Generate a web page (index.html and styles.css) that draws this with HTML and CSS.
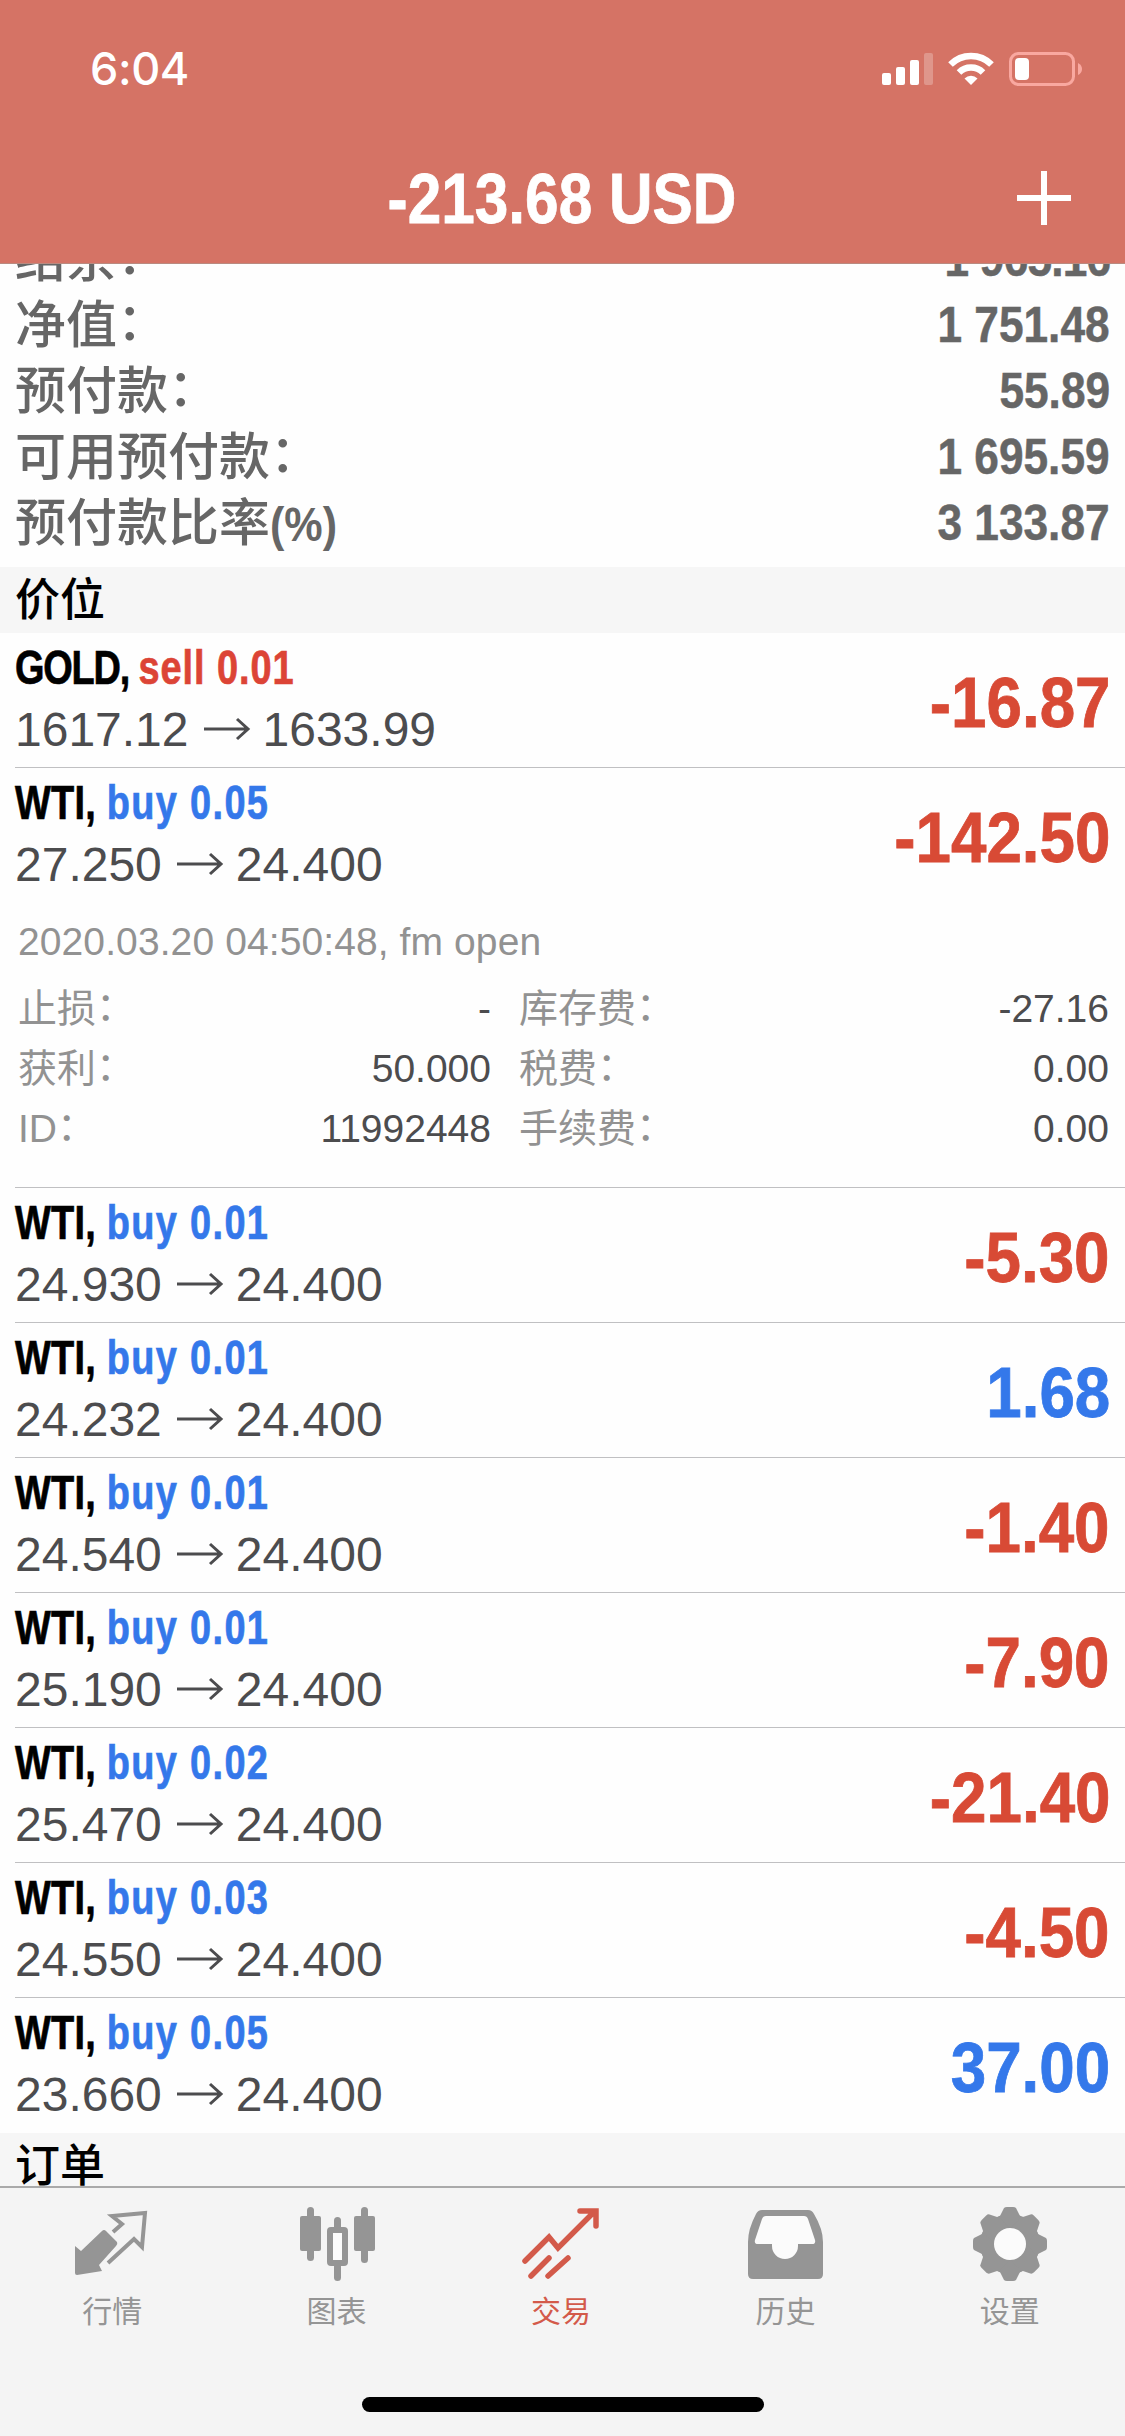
FILE: index.html
```
<!DOCTYPE html>
<html lang="zh-CN">
<head>
<meta charset="utf-8">
<title>交易</title>
<link rel="stylesheet" href="styles.css">
</head>
<body>
<svg class="defs" aria-hidden="true">
  <symbol id="arrow" viewBox="0 0 48 28"><path d="M1 14H45M34 4L45 14L34 24" fill="none" stroke="currentColor" stroke-width="3"/></symbol>
</svg>
<div class="app">
  <header class="top">
    <div class="status">
      <span class="time">6:04</span>
      <svg class="signals" width="202" height="36" viewBox="0 0 202 36">
        <g fill="#fff">
          <rect x="2" y="23" width="9" height="12" rx="2"/>
          <rect x="16" y="17" width="9" height="18" rx="2"/>
          <rect x="30" y="10" width="9" height="25" rx="2"/>
          <rect x="44" y="3" width="9" height="32" rx="2" opacity=".25"/>
          <path d="M91 35L84.500 28.500a9.200 9.200 0 0 1 13 0z"/>
        </g>
        <path d="M79 22.500a17 17 0 0 1 24 0M70.500 14.500a29 29 0 0 1 41 0" fill="none" stroke="#fff" stroke-width="6.500"/>
        <rect x="130.500" y="3.500" width="63" height="31" rx="8" fill="none" stroke="#f9a8a0" stroke-width="3"/>
        <rect x="135" y="8" width="14" height="22" rx="4" fill="#fff"/>
        <path d="M198 13q4 2 4 6t-4 6z" fill="#f9a8a0"/>
      </svg>
    </div>
    <div class="nav">
      <h1 class="total">-213.68 USD</h1>
      <svg class="add" width="54" height="54" viewBox="0 0 54 54"><path d="M27 0V54M0 27H54" stroke="#fff" stroke-width="6"/></svg>
    </div>
  </header>

  <main class="content">
    <dl class="account">
      <div><dt>结余<i>：</i></dt><dd class="balance">1 965.16</dd></div>
      <div><dt>净值<i>：</i></dt><dd>1 751.48</dd></div>
      <div><dt>预付款<i>：</i></dt><dd>55.89</dd></div>
      <div><dt>可用预付款<i>：</i></dt><dd>1 695.59</dd></div>
      <div><dt>预付款比率<b>(%)</b></dt><dd>3 133.87</dd></div>
    </dl>
    <h2 class="section">价位</h2>
    <section class="deals">
      <article class="deal"><div><h3><span class="gold">GOLD, </span><em class="sell">sell 0.01</em></h3><p>1617.12<svg class="to"><use href="#arrow"/></svg>1633.99</p></div><strong class="loss">-16.87</strong></article>
      <article class="deal open"><div><h3>WTI, <em>buy 0.05</em></h3><p>27.250<svg class="to"><use href="#arrow"/></svg>24.400</p></div><strong class="loss">-142.50</strong></article>
      <div class="details">
        <p>2020.03.20 04:50:48, fm open</p>
        <dl>
          <dt>止损<i>：</i></dt><dd>-</dd><dt>库存费<i>：</i></dt><dd>-27.16</dd>
          <dt>获利<i>：</i></dt><dd>50.000</dd><dt>税费<i>：</i></dt><dd>0.00</dd>
          <dt>ID<i>：</i></dt><dd>11992448</dd><dt>手续费<i>：</i></dt><dd>0.00</dd>
        </dl>
      </div>
      <article class="deal"><div><h3>WTI, <em>buy 0.01</em></h3><p>24.930<svg class="to"><use href="#arrow"/></svg>24.400</p></div><strong class="loss">-5.30</strong></article>
      <article class="deal"><div><h3>WTI, <em>buy 0.01</em></h3><p>24.232<svg class="to"><use href="#arrow"/></svg>24.400</p></div><strong>1.68</strong></article>
      <article class="deal"><div><h3>WTI, <em>buy 0.01</em></h3><p>24.540<svg class="to"><use href="#arrow"/></svg>24.400</p></div><strong class="loss">-1.40</strong></article>
      <article class="deal"><div><h3>WTI, <em>buy 0.01</em></h3><p>25.190<svg class="to"><use href="#arrow"/></svg>24.400</p></div><strong class="loss">-7.90</strong></article>
      <article class="deal"><div><h3>WTI, <em>buy 0.02</em></h3><p>25.470<svg class="to"><use href="#arrow"/></svg>24.400</p></div><strong class="loss">-21.40</strong></article>
      <article class="deal"><div><h3>WTI, <em>buy 0.03</em></h3><p>24.550<svg class="to"><use href="#arrow"/></svg>24.400</p></div><strong class="loss">-4.50</strong></article>
      <article class="deal last"><div><h3>WTI, <em>buy 0.05</em></h3><p>23.660<svg class="to"><use href="#arrow"/></svg>24.400</p></div><strong>37.00</strong></article>
    </section>
    <h2 class="section">订单</h2>
  </main>

  <nav class="tabs">
    <a class="tab"><svg viewBox="0 0 80 80"><path d="M3 41L9 46L30 26Q32 24 34 26L45 37Q46 39 44 41L27 60L30 66L5 70Q3 70 3 68Z" fill="currentColor"/><path d="M41 27L50 19L40 11L73 8L70 42L62 34L36 58" fill="none" stroke="currentColor" stroke-width="4"/></svg><span>行情</span></a>
    <a class="tab"><svg viewBox="0 0 80 80"><g fill="currentColor"><rect x="3" y="11" width="21" height="35" rx="2"/><rect x="10" y="2" width="7" height="54" rx="3.500"/><rect x="57" y="11" width="21" height="35" rx="2"/><rect x="64" y="2" width="7" height="56" rx="3.500"/><rect x="37" y="12" width="7" height="15" rx="3.500"/><rect x="37" y="58" width="7" height="18" rx="3.500"/></g><rect x="33" y="25" width="15" height="33" rx="1" fill="#fbfbfb" stroke="currentColor" stroke-width="6"/></svg><span>图表</span></a>
    <a class="tab active"><svg viewBox="0 0 80 80"><path d="M4 56L28 32L37 43L73 7M59 6H75V21M10 71L28 53M27 71L47 53" fill="none" stroke="currentColor" stroke-width="5.500" stroke-linecap="round" stroke-linejoin="miter"/></svg><span>交易</span></a>
    <a class="tab"><svg viewBox="0 0 80 80"><path fill="currentColor" d="M17 5H63Q67 5 69 9Q78 24 78 37V69Q78 74 73 74H8Q3 74 3 69V37Q3 24 11 9Q13 5 17 5Z"/><path d="M21 11H59Q62 11 63 14L70 35Q71 39 67 39H53V41A13 13 0 0 1 27 41V39H13Q9 39 10 35L17 14Q18 11 21 11Z" fill="#fbfbfb"/></svg><span>历史</span></a>
    <a class="tab"><svg viewBox="0 0 80 80"><g fill="currentColor"><circle cx="40" cy="39" r="30"/><g id="t"><path id="c" d="M29 13L34 3Q35 2 37 2H43Q45 2 46 3L51 13V65L46 75Q45 76 43 76H37Q35 76 34 75L29 65Z"/><use href="#c" transform="rotate(90 40 39)"/></g><use href="#t" transform="rotate(45 40 39)"/></g><circle cx="40" cy="39" r="16" fill="#fbfbfb"/></svg><span>设置</span></a>
  </nav>
  <div class="home"></div>
</div>
</body>
</html>
```
FILE: styles.css
```
* { box-sizing: border-box; margin: 0; padding: 0; }
body { font-family: "Liberation Sans", "Noto Sans CJK SC", sans-serif; background: #fefefe; }
i, em { font-style: normal; }
.defs { display: none; }
.app { width: 1125px; height: 2436px; overflow: hidden; display: flex; flex-direction: column; background: #fefefe; }

.top { height: 264px; flex: none; background: #d57365; color: #fff; border-bottom: 1px solid #b98a80; }
.status { height: 132px; padding: 50px 43px 0 90px; display: flex; justify-content: space-between; align-items: flex-start; }
.time { font: 500 45px/38px Inter, sans-serif; letter-spacing: -.4px; }
.nav { height: 132px; padding: 0 54px 0 107px; display: flex; align-items: center; }
.total { flex: 1; text-align: center; font-size: 71px; line-height: 132px; padding-top: 2px; white-space: nowrap; transform: scaleX(.85); -webkit-text-stroke: .8px; }
.add { flex: none; }

.content { flex: 1; min-height: 0; overflow: hidden; }
.account { height: 303px; overflow: hidden; color: #666; display: flex; flex-direction: column; justify-content: flex-end; padding-bottom: 10px; }
.account div { height: 66px; flex: none; display: flex; justify-content: space-between; padding: 0 15px 0 15px; line-height: 66px; }
.account dt { font-size: 51px; font-weight: 500; white-space: nowrap; }
.account dt b { display: inline-block; font-size: 49px; transform: scaleX(.88); transform-origin: left; }
.account dd { font-size: 50px; line-height: 64px; font-weight: 700; transform: scaleX(.885); transform-origin: right; white-space: nowrap; -webkit-text-stroke: .5px; }
.account dd.balance { letter-spacing: -.9px; }
dt i { position: relative; top: -.06em; }

.section { height: 66px; padding-left: 15px; background: #f6f6f6; color: #000; font-size: 45px; font-weight: 500; line-height: 68px; }

.deal { height: 135px; margin-left: 15px; padding-right: 15px; display: flex; justify-content: space-between; border-bottom: 1px solid #c0c0c2; }
.deal.open, .deal.last { border-bottom: 0; }
.deal h3 { font-size: 48px; line-height: 60px; padding-top: 5px; white-space: nowrap; transform: scaleX(.79); transform-origin: left; letter-spacing: .3px; -webkit-text-stroke: .7px; }
.deal .gold { letter-spacing: -1.500px; }
.deal em { color: #3478ea; letter-spacing: 1.700px; }
.deal em.sell { color: #dc4436; letter-spacing: 1.200px; }
.deal p { font-size: 48px; line-height: 60px; padding-top: 2px; color: #4c4c4e; white-space: nowrap; }
.to { width: 48px; height: 28px; margin: 0 12px 3px 14px; vertical-align: baseline; }
.deal strong { font-size: 70px; line-height: 140px; color: #3478ea; transform: scaleX(.91); transform-origin: right; -webkit-text-stroke: .8px; }
.deal strong.loss { color: #d84a35; }

.details { height: 285px; margin-left: 15px; padding: 9px 16px 0 3px; border-bottom: 1px solid #c0c0c2; font-size: 39px; line-height: 60px; color: #929292; }
.details p { letter-spacing: .1px; }
.details dl { display: grid; grid-template-columns: 200px 273px 230px 1fr; padding-top: 7px; }
.details dt, .details dd { height: 60px; }
.details dt:nth-of-type(even) { padding-left: 28px; }
.details dd { text-align: right; color: #4c4c4e; }

.tabs { flex: none; height: 190px; border-top: 2px solid #aaa; background: #f4f4f4; display: flex; padding-right: 3px; }
.tab { flex: 1; display: flex; flex-direction: column; align-items: center; color: #959595; padding-top: 17px; }
.tab svg { width: 80px; height: 80px; }
.tab span { font-size: 30px; line-height: 44px; margin-top: 5px; }
.tab.active { color: #d35a4a; }
.home { flex: none; height: 60px; background: #f4f4f4; padding: 21px 0 0 362px; }
.home::before { content: ""; display: block; width: 402px; height: 15px; border-radius: 8px; background: #000; }
```
